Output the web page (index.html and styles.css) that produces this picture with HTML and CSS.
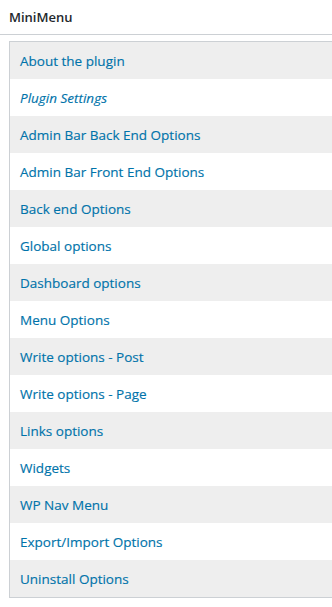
FILE: index.html
```html
<!DOCTYPE html>
<html lang="en">
<head>
    <meta charset="UTF-8">
    <meta name="viewport" content="width=device-width, initial-scale=1.0">
    <title>MiniMenu</title>
    <link rel="stylesheet" href="styles.css">
</head>
<body>
<div class="title-bar">
    <h1>MiniMenu</h1>
</div>
<ul class="mini-menu">
    <li><a href="#">About the plugin</a></li>
    <li class="current"><a href="#">Plugin Settings</a></li>
    <li><a href="#">Admin Bar Back End Options</a></li>
    <li><a href="#">Admin Bar Front End Options</a></li>
    <li><a href="#">Back end Options</a></li>
    <li><a href="#">Global options</a></li>
    <li><a href="#">Dashboard options</a></li>
    <li><a href="#">Menu Options</a></li>
    <li><a href="#">Write options - Post</a></li>
    <li><a href="#">Write options - Page</a></li>
    <li><a href="#">Links options</a></li>
    <li><a href="#">Widgets</a></li>
    <li><a href="#">WP Nav Menu</a></li>
    <li><a href="#">Export/Import Options</a></li>
    <li><a href="#">Uninstall Options</a></li>
</ul>
</body>
</html>
```

FILE: styles.css
```css
body {
    font-family: 'Open Sans', 'Noto Sans', sans-serif;
    font-size: 13px;
    color: #23282d;
    background: #fff;
    margin: 0;
}

.title-bar {
    height: 35px;
    border-bottom: 1px solid #ccd0d4;
    box-sizing: border-box;
    padding: 0 9px;
    display: flex;
    align-items: center;
}

.title-bar h1 {
    margin: 0;
    font-size: 13px;
    font-weight: 600;
}

.mini-menu {
    list-style: none;
    margin: 6px 0 0 9px;
    padding: 0;
    border: 1px solid #ccd0d4;
    border-right: none;
}

.mini-menu li {
    height: 37px;
    display: flex;
    align-items: center;
    padding-left: 10px;
}

.mini-menu li:nth-child(odd) {
    background: #eee;
}

.mini-menu a {
    color: #0073aa;
    text-decoration: none;
    font-size: 13.5px;
    -webkit-text-stroke: 0.15px #0073aa;
}

.mini-menu .current a {
    font-style: italic;
}
```
